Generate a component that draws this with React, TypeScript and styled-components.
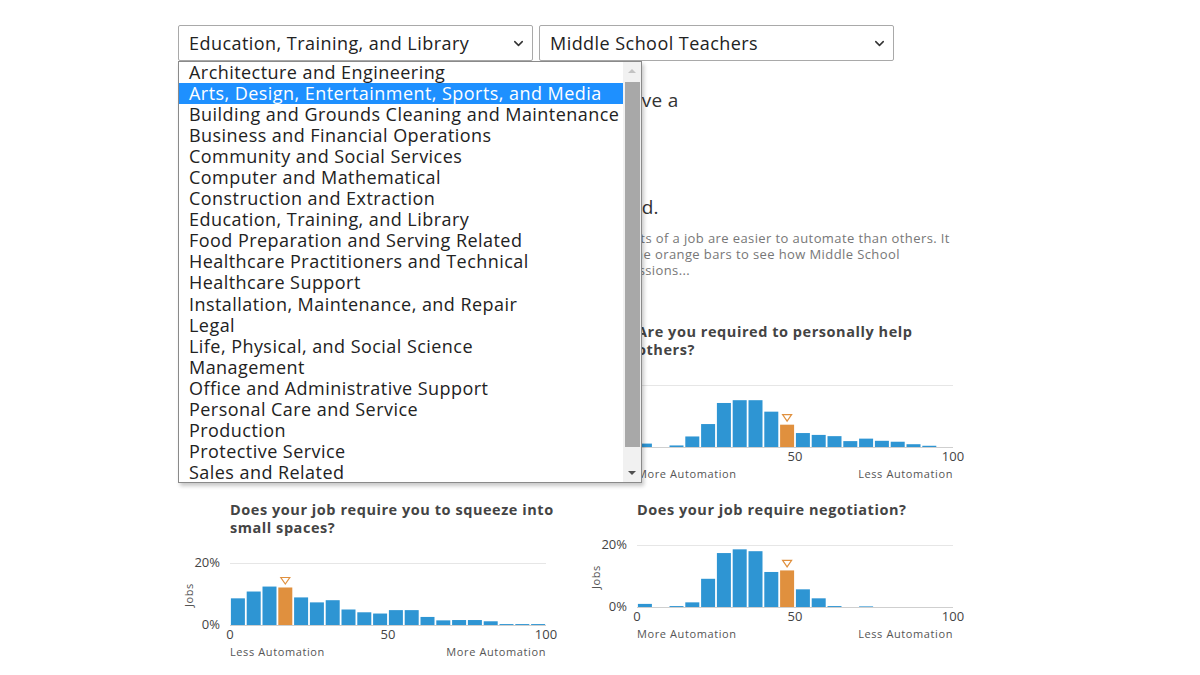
import React from 'react'
import styled, { createGlobalStyle } from 'styled-components'
import { ChevronDown } from 'lucide-react'

const FONT = `'Open Sans', 'Liberation Sans', sans-serif`
const BLUE = '#2e95d3'
const ORANGE = '#e0903e'

const GlobalStyle = createGlobalStyle`
  body {
    margin: 0;
    background: #fff;
    font-family: ${FONT};
    color: #222;
  }
`

const categories = [
  'Architecture and Engineering',
  'Arts, Design, Entertainment, Sports, and Media',
  'Building and Grounds Cleaning and Maintenance',
  'Business and Financial Operations',
  'Community and Social Services',
  'Computer and Mathematical',
  'Construction and Extraction',
  'Education, Training, and Library',
  'Food Preparation and Serving Related',
  'Healthcare Practitioners and Technical',
  'Healthcare Support',
  'Installation, Maintenance, and Repair',
  'Legal',
  'Life, Physical, and Social Science',
  'Management',
  'Office and Administrative Support',
  'Personal Care and Service',
  'Production',
  'Protective Service',
  'Sales and Related',
  'Transportation and Material Moving',
]

type ChartData = {
  title: string
  values: number[]
  mine: number
  reversed?: boolean
}

const charts: ChartData[] = [
  {
    title: 'Does your job require you to work outdoors?',
    values: [2, 3, 5, 9, 14, 16, 13, 10, 8, 7, 5, 3, 2, 1.5, 1, 0.6, 0.4, 0.2, 0.1, 0],
    mine: 4,
  },
  {
    title: 'Are you required to personally help others?',
    values: [1.1, 0, 0.5, 3.4, 7.4, 14.2, 15.1, 15.1, 11.4, 7.2, 4.5, 3.9, 3.5, 1.9, 2.7, 2, 1.7, 0.9, 0.4, 0],
    mine: 9,
    reversed: true,
  },
  {
    title: 'Does your job require you to squeeze into small spaces?',
    values: [8.6, 10.8, 12.4, 12.1, 8.9, 7.3, 8, 5, 4.1, 3.7, 4.8, 4.8, 2.6, 1.5, 1.6, 1.6, 1.2, 0.3, 0.3, 0.3],
    mine: 3,
  },
  {
    title: 'Does your job require negotiation?',
    values: [1, 0, 0.3, 1.5, 9.1, 17.4, 18.6, 18, 11.3, 11.8, 5.7, 2.8, 0.3, 0, 0.2, 0, 0, 0, 0, 0],
    mine: 9,
    reversed: true,
  },
]

const PLOT_X = 52
const PLOT_W = 316
const GRID_Y = 16
const BASE_Y = 78
const STEP = PLOT_W / 20

const Histogram = ({ values, mine, reversed }: ChartData) => {
  const h = (v: number) => (v / 20) * (BASE_Y - GRID_Y)
  const mx = PLOT_X + mine * STEP + STEP / 2
  const mt = BASE_Y - h(values[mine])
  return (
    <Plot width={380} height={115} viewBox="0 0 380 115">
      <line x1={PLOT_X} x2={PLOT_X + PLOT_W} y1={GRID_Y + 0.5} y2={GRID_Y + 0.5} stroke="#e6e6e6" />
      <line x1={PLOT_X} x2={PLOT_X + PLOT_W} y1={BASE_Y + 0.5} y2={BASE_Y + 0.5} stroke="#cfcfcf" />
      {values.map((v, i) => (
        <rect
          key={i}
          x={PLOT_X + i * STEP + 0.9}
          y={BASE_Y - h(v)}
          width={14}
          height={h(v)}
          fill={i === mine ? ORANGE : BLUE}
        />
      ))}
      <polygon
        points={`${mx - 4.5},${mt - 10} ${mx + 4.5},${mt - 10} ${mx},${mt - 3.5}`}
        fill="#fff"
        stroke={ORANGE}
        strokeWidth={1.2}
      />
      <text x={42} y={GRID_Y + 4} textAnchor="end" className="tick">20%</text>
      <text x={42} y={BASE_Y + 4} textAnchor="end" className="tick">0%</text>
      <text x={12} y={48} transform="rotate(-90 12 48)" textAnchor="middle" dominantBaseline="middle" className="axis">
        Jobs
      </text>
      <text x={PLOT_X} y={BASE_Y + 14} textAnchor="middle" className="tick">0</text>
      <text x={PLOT_X + PLOT_W / 2} y={BASE_Y + 14} textAnchor="middle" className="tick">50</text>
      <text x={PLOT_X + PLOT_W} y={BASE_Y + 14} textAnchor="middle" className="tick">100</text>
      <text x={PLOT_X} y={BASE_Y + 31} className="axis">
        {reversed ? 'More Automation' : 'Less Automation'}
      </text>
      <text x={PLOT_X + PLOT_W} y={BASE_Y + 31} textAnchor="end" className="axis">
        {reversed ? 'Less Automation' : 'More Automation'}
      </text>
    </Plot>
  )
}

const App = () => {
  return (
    <Page>
      <GlobalStyle />
      <Controls>
        <SelectWrap>
          <Select>
            <span>Education, Training, and Library</span>
            <ChevronDown size={15} strokeWidth={2.4} />
          </Select>
          <Dropdown>
            <Options>
              {categories.map((c) => (
                <Option key={c} $active={c.startsWith('Arts')}>
                  {c}
                </Option>
              ))}
            </Options>
            <Scrollbar>
              <Arrow $up $disabled />
              <Thumb />
              <Track />
              <Arrow />
            </Scrollbar>
          </Dropdown>
        </SelectWrap>
        <SelectWrap>
          <Select>
            <span>Middle School Teachers</span>
            <ChevronDown size={15} strokeWidth={2.4} />
          </Select>
        </SelectWrap>
      </Controls>

      <Header>
        <Score>
          <BigNumber>18%</BigNumber>
          <ScoreLabel>risk</ScoreLabel>
        </Score>
        <Summary>
          <Lead>You have a</Lead>
          <Lead $gap>affected.</Lead>
          <Note>
            Some parts of a job are easier to automate than others. It
            <br />
            Look at the orange bars to see how Middle School
            <br />
            the professions...
          </Note>
        </Summary>
      </Header>

      <Charts>
        {charts.map((c) => (
          <Chart key={c.title}>
            <ChartTitle>{c.title}</ChartTitle>
            <Histogram {...c} />
          </Chart>
        ))}
      </Charts>
    </Page>
  )
}

const Page = styled.div`
  width: 782px;
  padding: 25px 0 0 178px;
`

const Controls = styled.div`
  display: flex;
  gap: 6px;
`

const SelectWrap = styled.div`
  position: relative;
  width: 355px;
`

const Select = styled.div`
  height: 36px;
  box-sizing: border-box;
  border: 1px solid #a9a9a9;
  border-radius: 2px;
  background: #fff;
  display: flex;
  align-items: center;
  justify-content: space-between;
  padding: 0 6px 0 10px;
  font-size: 18px;
  letter-spacing: 0.45px;
  color: #222;

  svg {
    color: #333;
  }
`

const Dropdown = styled.div`
  position: absolute;
  top: 36px;
  left: 0;
  z-index: 10;
  width: 464px;
  height: 422px;
  box-sizing: border-box;
  border: 1px solid #8a8a8a;
  background: #fff;
  box-shadow: 2px 3px 4px rgba(0, 0, 0, 0.22);
  display: flex;
  overflow: hidden;
`

const Options = styled.ul`
  flex: 1;
  margin: 0;
  padding: 0;
  list-style: none;
  overflow: hidden;
`

const Option = styled.li<{ $active?: boolean }>`
  height: 21.05px;
  line-height: 21px;
  padding: 0 10px;
  font-size: 18px;
  letter-spacing: 0.45px;
  white-space: nowrap;
  color: ${(p) => (p.$active ? '#fff' : '#222')};
  background: ${(p) => (p.$active ? '#1e90ff' : 'transparent')};
`

const Scrollbar = styled.div`
  width: 18px;
  background: #f1f1f1;
  display: flex;
  flex-direction: column;
  align-items: center;
`

const Arrow = styled.div<{ $up?: boolean; $disabled?: boolean }>`
  height: 18px;
  width: 100%;
  display: flex;
  align-items: center;
  justify-content: center;

  &::before {
    content: '';
    border-left: 4px solid transparent;
    border-right: 4px solid transparent;
    ${(p) =>
      p.$up
        ? `border-bottom: 4px solid ${p.$disabled ? '#c3c3c3' : '#505050'};`
        : `border-top: 4px solid ${p.$disabled ? '#c3c3c3' : '#505050'};`}
  }
`

const Thumb = styled.div`
  margin-top: 2px;
  width: 15px;
  height: 365px;
  background: #a8a8a8;
`

const Track = styled.div`
  flex: 1;
`

const Header = styled.div`
  display: grid;
  grid-template-columns: 368px 1fr;
  column-gap: 33px;
  margin-top: 28px;
`

const Score = styled.div`
  display: flex;
  flex-direction: column;
  align-items: center;
  padding-top: 60px;
`

const BigNumber = styled.div`
  font-size: 64px;
  font-weight: 700;
  color: ${ORANGE};
`

const ScoreLabel = styled.div`
  font-size: 14px;
  color: #777;
`

const Summary = styled.div`
  display: flex;
  flex-direction: column;
`

const Lead = styled.p<{ $gap?: boolean }>`
  margin: ${(p) => (p.$gap ? '84px' : '0')} 0 0;
  font-size: 19px;
  line-height: 23px;
  letter-spacing: 0.3px;
  color: #333;
`

const Note = styled.p`
  margin: 11px 0 0;
  font-size: 13px;
  line-height: 16px;
  letter-spacing: 0.4px;
  color: #777;
`

const Charts = styled.div`
  display: grid;
  grid-template-columns: 368px 1fr;
  column-gap: 39px;
  row-gap: 17px;
  margin-top: 45px;
`

const Chart = styled.div`
  display: flex;
  flex-direction: column;
`

const ChartTitle = styled.h3`
  align-self: flex-start;
  width: 330px;
  margin: 0 0 10px 52px;
  font-size: 14.5px;
  line-height: 18px;
  font-weight: 700;
  letter-spacing: 0.55px;
  color: #444;
`

const Plot = styled.svg`
  display: block;
  overflow: visible;

  text {
    font-family: ${FONT};
  }
  .tick {
    font-size: 13px;
    fill: #444;
  }
  .axis {
    font-size: 11px;
    letter-spacing: 0.6px;
    fill: #555;
  }
`

export default App
